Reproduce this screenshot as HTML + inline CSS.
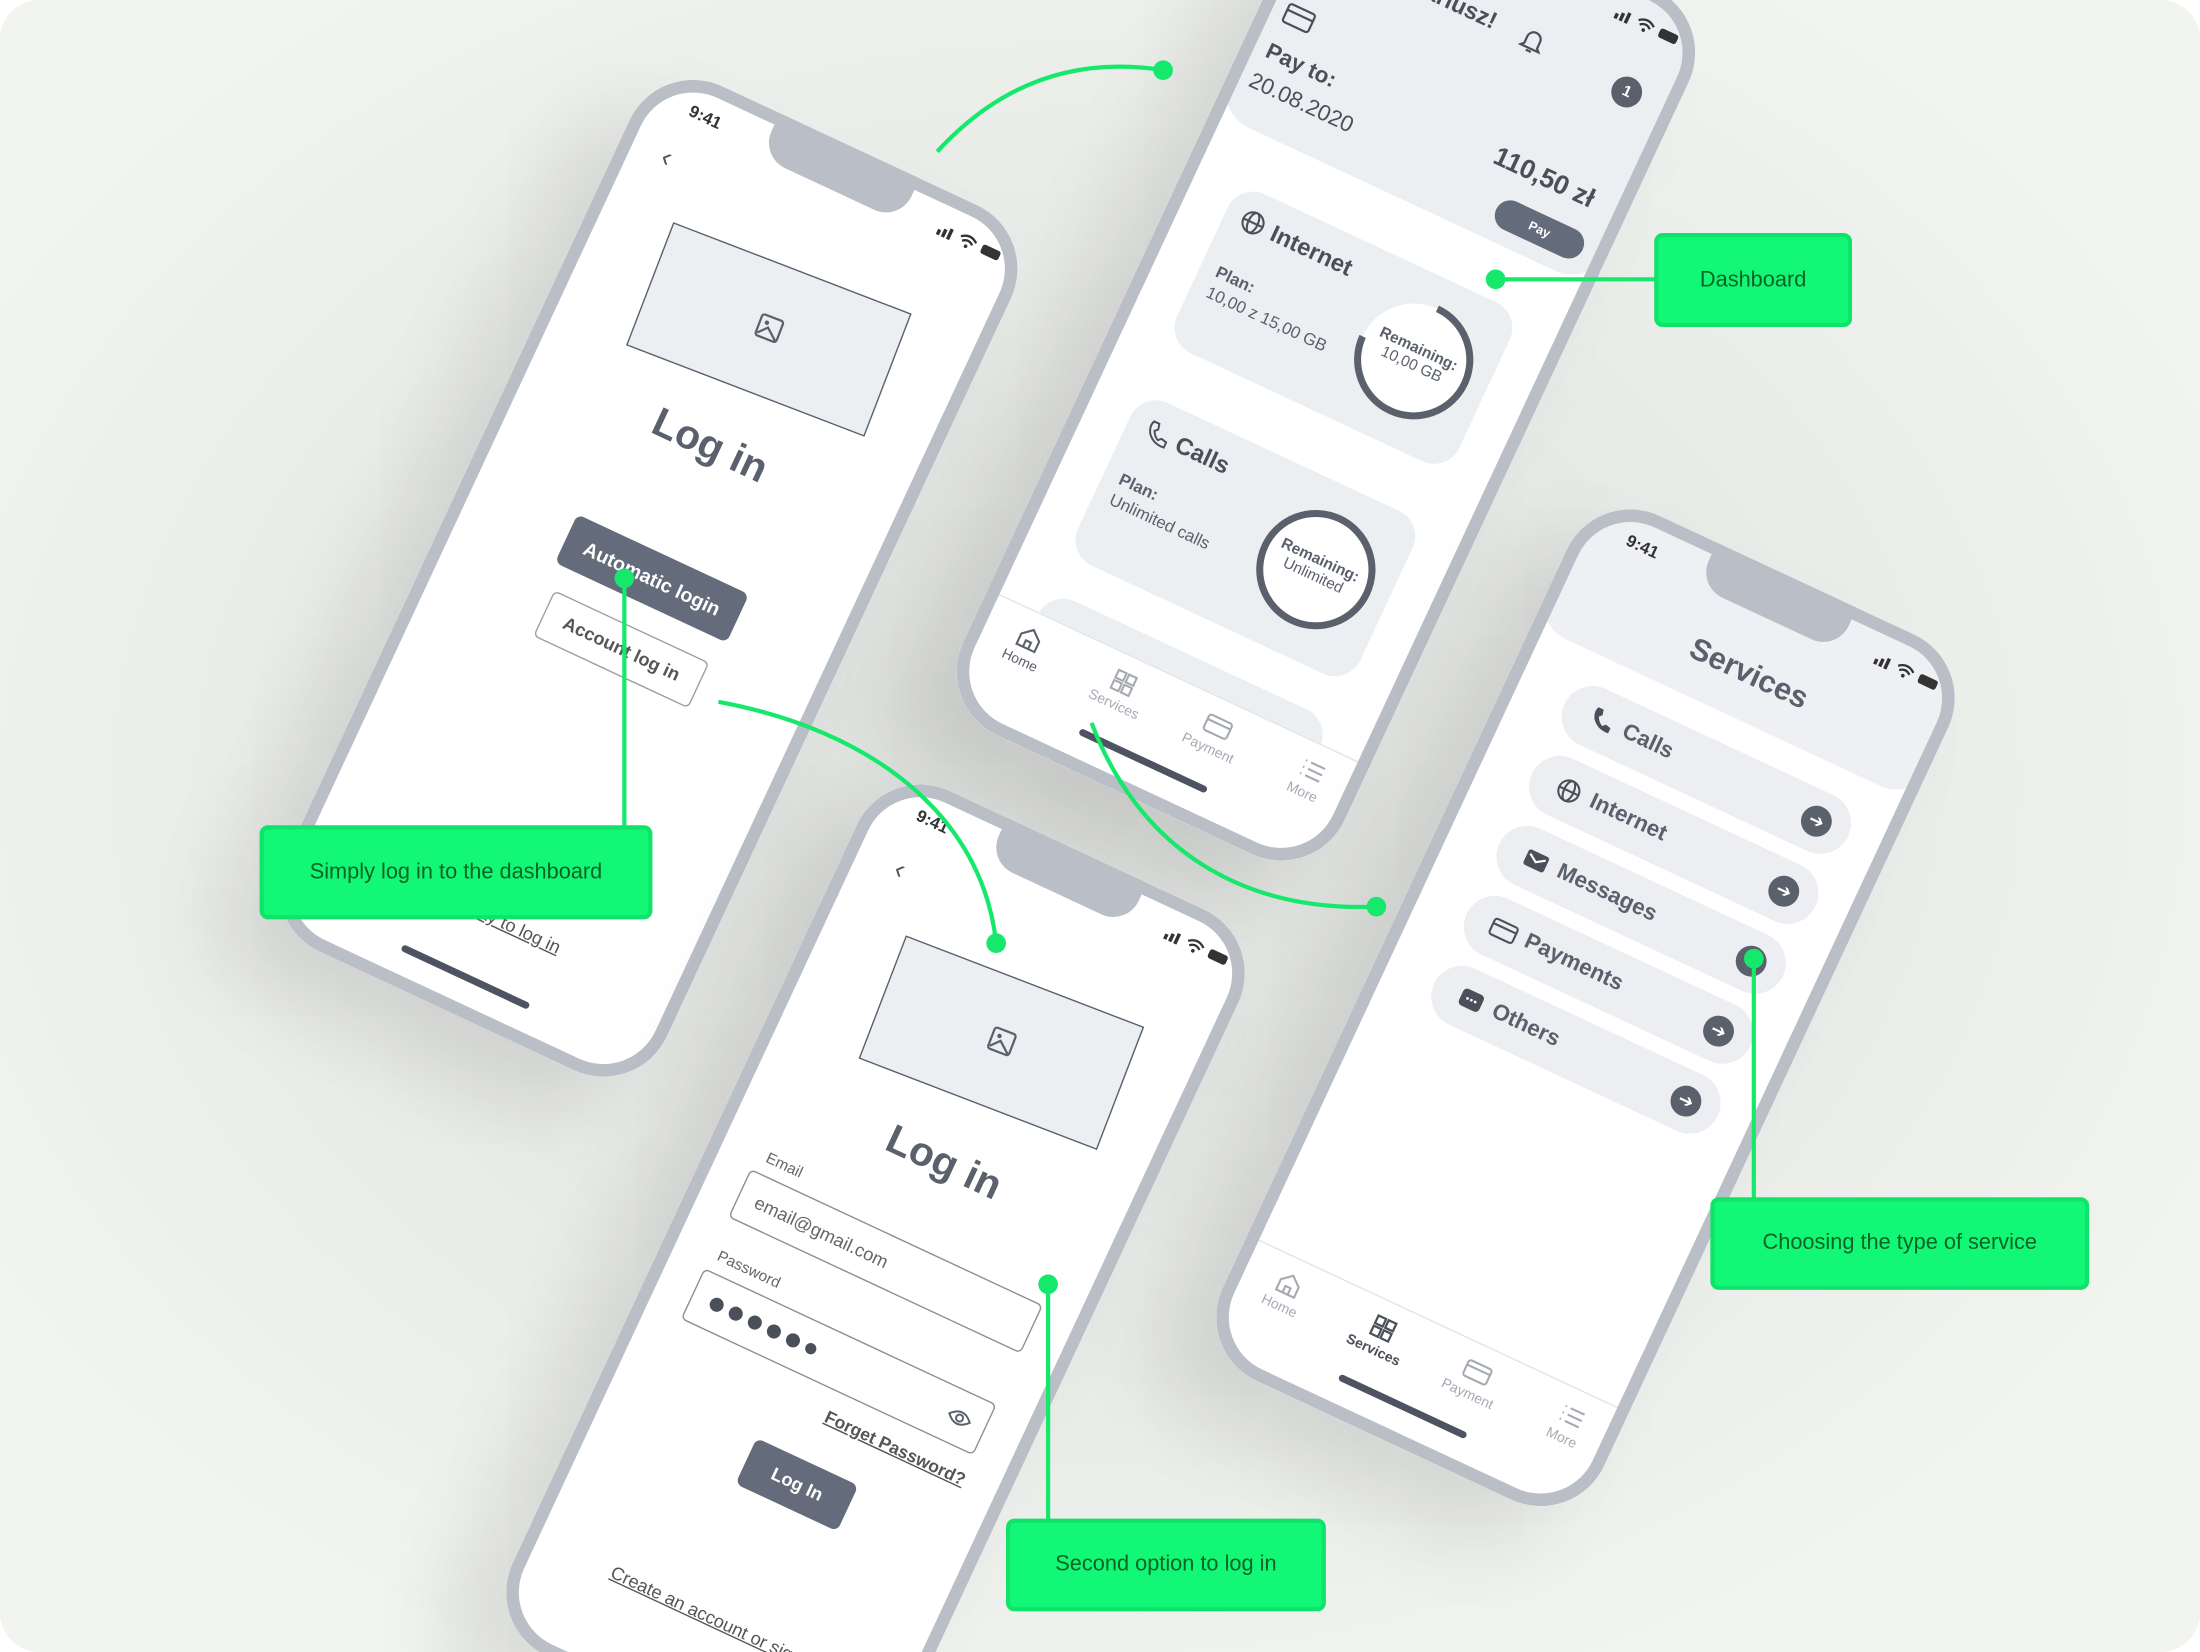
<!DOCTYPE html>
<html><head><meta charset="utf-8">
<style>
html,body{margin:0;padding:0;background:#fff;width:2200px;height:1652px;overflow:hidden;font-family:"Liberation Sans",sans-serif}
#stage{position:absolute;left:0;top:0;width:1568px;height:1177px;transform:scale(1.40306,1.40357);transform-origin:0 0;overflow:hidden;border-radius:28px;
background:radial-gradient(ellipse 900px 700px at 760px 560px,#dcdedb 0%,#e6e8e5 45%,#f2f4f0 100%)}
.ph{position:absolute;width:300px;height:680px;transform:rotate(25deg);border-radius:50px;background:#fff;overflow:hidden;box-shadow:-30px 40px 60px rgba(0,0,0,.10)}
.bz{position:absolute;left:0;top:0;right:0;bottom:0;border:9px solid #b9bec7;border-radius:50px;z-index:50}
.notch{position:absolute;left:95px;top:0;width:110px;height:34px;background:#b9bec7;border-radius:0 0 20px 20px;z-index:40}
.a{position:absolute}
.t941{position:absolute;left:36px;top:18px;font-size:12px;font-weight:bold;color:#333;z-index:41}
.st{position:absolute;left:232px;top:20px;z-index:41}
.img{position:absolute;left:62px;top:96px;width:180px;height:92px;border:1.6px solid #5a606c;background:#eceff2;transform:rotate(-4deg)}
.h1{position:absolute;left:0;width:300px;text-align:center;font-size:29px;font-weight:bold;color:#5a606c}
.btn{position:absolute;background:#646c7b;color:#fff;font-size:14px;font-weight:bold;text-align:center;border-radius:5px}
.obtn{position:absolute;border:1.5px solid #9aa0aa;color:#555;font-size:13px;font-weight:bold;text-align:center;border-radius:4px;background:#fff}
.ind{position:absolute;left:102px;top:650px;width:100px;height:5px;border-radius:3px;background:#4d5360;z-index:45}
.card{position:absolute;left:40px;width:222px;background:#eceff2;border-radius:20px}
.tabs{position:absolute;left:0;top:588px;width:300px;height:92px;background:#fff;border-top:1px solid #e2e4e8;z-index:30}
.tab{position:absolute;top:10px;width:60px;text-align:center;font-size:10px;color:#a5aab2}
.row{position:absolute;left:45px;width:223px;height:44px;background:#eceef1;border-radius:22px}
.row span{position:absolute;left:46px;top:13px;font-size:16px;font-weight:bold;color:#5a606c}
.arr{position:absolute;right:14px;top:11px;width:22px;height:22px;border-radius:11px;background:#5a606c;color:#fff;font-size:13px;text-align:center;line-height:22px}
.lbl{position:absolute;background:#13f777;border:3px solid #10e36a;border-radius:6px;color:#0b6425;font-size:15.5px;text-align:center;box-sizing:border-box}
</style></head><body>
<div id="stage">

<div class="ph" style="left:312px;top:72px">
 <div class="notch"></div><div class="t941">9:41</div>
 <svg class="st" width="50" height="12" viewBox="0 0 50 12"><rect x="0" y="7" width="2.5" height="4" fill="#333"/><rect x="4" y="5" width="2.5" height="6" fill="#333"/><rect x="8" y="3" width="2.5" height="8" fill="#333"/><path d="M17 5 Q23 0 29 5 M19 7.5 Q23 4 27 7.5" stroke="#333" stroke-width="1.6" fill="none"/><circle cx="23" cy="10" r="1.3" fill="#333"/><rect x="34" y="3" width="14" height="7" rx="2" fill="#333"/></svg>
 <div class="a" style="left:32px;top:52px;font-size:20px;color:#555">‹</div>
 <div class="img"><svg style="position:absolute;left:80px;top:35px" width="20" height="20" viewBox="0 0 20 20"><rect x="2" y="2" width="16" height="16" rx="2" fill="none" stroke="#5a606c" stroke-width="1.6"/><circle cx="7" cy="7" r="1.6" fill="#5a606c"/><path d="M3 16 L9 10 L17 17" stroke="#5a606c" stroke-width="1.6" fill="none"/></svg></div>
 <div class="h1" style="top:220px">Log in</div>
 <div class="btn" style="left:85px;top:320px;width:135px;height:38px;line-height:38px">Automatic login</div>
 <div class="obtn" style="left:93px;top:376px;width:120px;height:34px;line-height:34px">Account log in</div>
 <div class="a" style="left:0;width:300px;top:598px;text-align:center;font-size:13px;color:#555;text-decoration:underline">Other way to log in</div>
 <div class="ind"></div>
 <div class="bz"></div>
</div>

<div class="ph" style="left:795px;top:-82px">
 <div class="a" style="left:0;top:0;width:300px;height:212px;background:#eceff2;border-radius:0 0 30px 30px"></div>
 <div class="notch"></div>
 <svg class="st" width="50" height="12" viewBox="0 0 50 12"><rect x="0" y="7" width="2.5" height="4" fill="#333"/><rect x="4" y="5" width="2.5" height="6" fill="#333"/><rect x="8" y="3" width="2.5" height="8" fill="#333"/><path d="M17 5 Q23 0 29 5 M19 7.5 Q23 4 27 7.5" stroke="#333" stroke-width="1.6" fill="none"/><circle cx="23" cy="10" r="1.3" fill="#333"/><rect x="34" y="3" width="14" height="7" rx="2" fill="#333"/></svg>
 <div class="a" style="left:62px;top:60px;font-size:17px;font-weight:bold;color:#4a4f59">Hi, Mariusz!</div>
 <svg class="a" style="left:178px;top:60px" width="18" height="20" viewBox="0 0 18 20"><path d="M4 14 V9 a5 5 0 0 1 10 0 V14 L16 16 H2 Z M7 18 h4" stroke="#4a4f59" stroke-width="1.6" fill="none"/></svg>
 <div class="a" style="left:252px;top:64px;width:22px;height:22px;border-radius:11px;background:#5a606c;color:#fff;font-size:11px;text-align:center;line-height:22px;font-weight:bold">1</div>
 <svg class="a" style="left:18px;top:118px" width="22" height="16" viewBox="0 0 22 16"><rect x="1" y="1" width="20" height="14" rx="2" fill="none" stroke="#4a4f59" stroke-width="1.6"/><path d="M1 6 H21" stroke="#4a4f59" stroke-width="1.6"/></svg>
 <div class="a" style="left:18px;top:148px;font-size:16px;font-weight:bold;color:#4a4f59">Pay to:</div>
 <div class="a" style="left:16px;top:172px;font-size:16px;color:#4a4f59">20.08.2020</div>
 <div class="a" style="left:170px;top:145px;width:104px;text-align:right;font-size:19px;font-weight:bold;color:#4a4f59">110,50 zł</div>
 <div class="btn" style="left:214px;top:179px;width:68px;height:22px;line-height:22px;font-size:9px;border-radius:11px">Pay</div>
 <div class="card" style="top:250px;height:125px">
  <svg class="a" style="left:12px;top:13px" width="18" height="18" viewBox="0 0 18 18"><circle cx="9" cy="9" r="7.5" fill="none" stroke="#4a4f59" stroke-width="1.5"/><ellipse cx="9" cy="9" rx="3.5" ry="7.5" fill="none" stroke="#4a4f59" stroke-width="1.5"/><path d="M1.5 9 H16.5" stroke="#4a4f59" stroke-width="1.5"/></svg>
  <div class="a" style="left:36px;top:13px;font-size:17px;font-weight:bold;color:#4a4f59">Internet</div>
  <div class="a" style="left:12px;top:57px;font-size:12px;font-weight:bold;color:#5a606c">Plan:</div>
  <div class="a" style="left:12px;top:73px;font-size:12px;color:#5a606c">10,00 z 15,00 GB</div>
  <svg class="a" style="left:121px;top:17px" width="90" height="90" viewBox="0 0 90 90"><circle cx="45" cy="45" r="40" fill="#fff"/><circle cx="45" cy="45" r="40" fill="none" stroke="#5a606c" stroke-width="5" stroke-dasharray="188 300" transform="rotate(-90 45 45)"/></svg>
  <div class="a" style="left:121px;top:48px;width:90px;text-align:center;font-size:11px;font-weight:bold;color:#5a606c">Remaining:<br><span style="font-weight:normal">10,00 GB</span></div>
 </div>
 <div class="card" style="top:414px;height:128px">
  <svg class="a" style="left:14px;top:14px" width="18" height="18" viewBox="0 0 18 18"><path d="M3 2 L7 2 L8 6 L6 8 Q8 12 11 13 L13 11 L17 12 L17 16 Q9 17 4 11 Q1 6 3 2 Z" fill="none" stroke="#4a4f59" stroke-width="1.4"/></svg>
  <div class="a" style="left:38px;top:14px;font-size:17px;font-weight:bold;color:#4a4f59">Calls</div>
  <div class="a" style="left:12px;top:56px;font-size:12px;font-weight:bold;color:#5a606c">Plan:</div>
  <div class="a" style="left:12px;top:72px;font-size:12px;color:#5a606c">Unlimited calls</div>
  <svg class="a" style="left:121px;top:18px" width="90" height="90" viewBox="0 0 90 90"><circle cx="45" cy="45" r="40" fill="#fff" stroke="#5a606c" stroke-width="5"/></svg>
  <div class="a" style="left:121px;top:50px;width:90px;text-align:center;font-size:11px;font-weight:bold;color:#5a606c">Remaining:<br><span style="font-weight:normal">Unlimited</span></div>
 </div>
 <div class="card" style="top:570px;height:80px"></div>
 <div class="tabs">
  <div class="tab" style="left:12px;color:#5a606c"><svg width="18" height="18" viewBox="0 0 18 18"><path d="M2 8 L9 2 L16 8 V16 H2 Z M7 16 V11 H11 V16" fill="none" stroke="#5a606c" stroke-width="1.5"/></svg><br>Home</div>
  <div class="tab" style="left:86px"><svg width="18" height="18" viewBox="0 0 18 18"><rect x="2" y="2" width="6" height="6" fill="none" stroke="#a5aab2" stroke-width="1.5"/><rect x="10" y="2" width="6" height="6" fill="none" stroke="#a5aab2" stroke-width="1.5"/><rect x="2" y="10" width="6" height="6" fill="none" stroke="#a5aab2" stroke-width="1.5"/><rect x="10" y="10" width="6" height="6" fill="none" stroke="#a5aab2" stroke-width="1.5"/></svg><br>Services</div>
  <div class="tab" style="left:160px"><svg width="20" height="18" viewBox="0 0 20 18"><rect x="1" y="3" width="18" height="12" rx="2" fill="none" stroke="#a5aab2" stroke-width="1.5"/><path d="M1 7 H19" stroke="#a5aab2" stroke-width="1.5"/></svg><br>Payment</div>
  <div class="tab" style="left:234px"><svg width="18" height="18" viewBox="0 0 18 18"><path d="M6 4 H17 M6 9 H17 M6 14 H17 M2 4 H3 M2 9 H3 M2 14 H3" stroke="#a5aab2" stroke-width="1.5"/></svg><br>More</div>
 </div>
 <div class="ind"></div>
 <div class="bz"></div>
</div>

<div class="ph" style="left:474px;top:574px">
 <div class="notch"></div><div class="t941">9:41</div>
 <svg class="st" width="50" height="12" viewBox="0 0 50 12"><rect x="0" y="7" width="2.5" height="4" fill="#333"/><rect x="4" y="5" width="2.5" height="6" fill="#333"/><rect x="8" y="3" width="2.5" height="8" fill="#333"/><path d="M17 5 Q23 0 29 5 M19 7.5 Q23 4 27 7.5" stroke="#333" stroke-width="1.6" fill="none"/><circle cx="23" cy="10" r="1.3" fill="#333"/><rect x="34" y="3" width="14" height="7" rx="2" fill="#333"/></svg>
 <div class="a" style="left:38px;top:55px;font-size:20px;color:#555">‹</div>
 <div class="img" style="left:68px;top:100px"><svg style="position:absolute;left:80px;top:35px" width="20" height="20" viewBox="0 0 20 20"><rect x="2" y="2" width="16" height="16" rx="2" fill="none" stroke="#5a606c" stroke-width="1.6"/><circle cx="7" cy="7" r="1.6" fill="#5a606c"/><path d="M3 16 L9 10 L17 17" stroke="#5a606c" stroke-width="1.6" fill="none"/></svg></div>
 <div class="h1" style="top:226px;left:8px">Log in</div>
 <div class="a" style="left:42px;top:286px;font-size:11px;color:#666">Email</div>
 <div class="a" style="left:35px;top:304px;width:230px;height:38px;border:1.5px solid #8a909a;border-radius:4px;box-sizing:border-box"><span style="position:absolute;left:12px;top:11px;font-size:13px;color:#666">email@gmail.com</span></div>
 <div class="a" style="left:40px;top:364px;font-size:11px;color:#666">Password</div>
 <div class="a" style="left:35px;top:382px;width:230px;height:40px;border:1.5px solid #8a909a;border-radius:4px;box-sizing:border-box">
  <svg style="position:absolute;left:12px;top:13px" width="90" height="12" viewBox="0 0 90 12"><circle cx="6" cy="6" r="5" fill="#4a4f59"/><circle cx="21" cy="6" r="5" fill="#4a4f59"/><circle cx="36" cy="6" r="5" fill="#4a4f59"/><circle cx="51" cy="6" r="5" fill="#4a4f59"/><circle cx="66" cy="6" r="5" fill="#4a4f59"/><circle cx="80" cy="6" r="4" fill="#4a4f59"/></svg>
  <svg style="position:absolute;right:10px;top:12px" width="18" height="14" viewBox="0 0 18 14"><path d="M1 7 Q9 -2 17 7 Q9 16 1 7 Z" fill="none" stroke="#5a606c" stroke-width="1.4"/><circle cx="9" cy="7" r="2.5" fill="none" stroke="#5a606c" stroke-width="1.4"/></svg>
 </div>
 <div class="a" style="left:130px;width:137px;top:434px;text-align:right;font-size:12.5px;font-weight:bold;color:#555;text-decoration:underline">Forget Password?</div>
 <div class="btn" style="left:120px;top:476px;width:80px;height:36px;line-height:36px;font-size:13px">Log In</div>
 <div class="a" style="left:0;width:300px;top:598px;text-align:center;font-size:13px;color:#555;text-decoration:underline">Create an account or sign up</div>
 <div class="bz"></div>
</div>

<div class="ph" style="left:980px;top:378px">
 <div class="a" style="left:0;top:0;width:300px;height:108px;background:#eef0f3;border-radius:0 0 26px 26px"></div>
 <div class="notch"></div><div class="t941">9:41</div>
 <svg class="st" width="50" height="12" viewBox="0 0 50 12"><rect x="0" y="7" width="2.5" height="4" fill="#333"/><rect x="4" y="5" width="2.5" height="6" fill="#333"/><rect x="8" y="3" width="2.5" height="8" fill="#333"/><path d="M17 5 Q23 0 29 5 M19 7.5 Q23 4 27 7.5" stroke="#333" stroke-width="1.6" fill="none"/><circle cx="23" cy="10" r="1.3" fill="#333"/><rect x="34" y="3" width="14" height="7" rx="2" fill="#333"/></svg>
 <div class="a" style="left:0;width:310px;top:62px;text-align:center;font-size:22px;font-weight:bold;color:#5a606c">Services</div>
 <div class="row" style="top:128px"><svg class="a" style="left:20px;top:12px" width="18" height="18" viewBox="0 0 18 18"><path d="M3 2 L7 2 L8 6 L6 8 Q8 12 11 13 L13 11 L17 12 L17 16 Q9 17 4 11 Q1 6 3 2 Z" fill="#4a4f59"/></svg><span>Calls</span><div class="arr">➔</div></div>
 <div class="row" style="top:183px"><svg class="a" style="left:20px;top:13px" width="18" height="18" viewBox="0 0 18 18"><circle cx="9" cy="9" r="7.5" fill="none" stroke="#4a4f59" stroke-width="1.5"/><ellipse cx="9" cy="9" rx="3.5" ry="7.5" fill="none" stroke="#4a4f59" stroke-width="1.5"/><path d="M1.5 9 H16.5" stroke="#4a4f59" stroke-width="1.5"/></svg><span>Internet</span><div class="arr">➔</div></div>
 <div class="row" style="top:238px"><svg class="a" style="left:20px;top:14px" width="18" height="16" viewBox="0 0 18 16"><rect x="1" y="2" width="16" height="12" rx="2" fill="#4a4f59"/><path d="M3 5 L9 9 L15 5" stroke="#fff" stroke-width="1.5" fill="none"/></svg><span>Messages</span><div class="arr">➔</div></div>
 <div class="row" style="top:293px"><svg class="a" style="left:19px;top:14px" width="20" height="16" viewBox="0 0 20 16"><rect x="1" y="2" width="18" height="12" rx="2" fill="none" stroke="#4a4f59" stroke-width="1.5"/><path d="M1 6 H19" stroke="#4a4f59" stroke-width="1.5"/></svg><span>Payments</span><div class="arr">➔</div></div>
 <div class="row" style="top:348px"><svg class="a" style="left:20px;top:13px" width="18" height="18" viewBox="0 0 18 18"><rect x="1" y="2" width="16" height="13" rx="3" fill="#4a4f59"/><circle cx="6" cy="8.5" r="1" fill="#fff"/><circle cx="9" cy="8.5" r="1" fill="#fff"/><circle cx="12" cy="8.5" r="1" fill="#fff"/></svg><span>Others</span><div class="arr">➔</div></div>
 <div class="tabs">
  <div class="tab" style="left:12px"><svg width="18" height="18" viewBox="0 0 18 18"><path d="M2 8 L9 2 L16 8 V16 H2 Z M7 16 V11 H11 V16" fill="none" stroke="#a5aab2" stroke-width="1.5"/></svg><br>Home</div>
  <div class="tab" style="left:86px;color:#4a4f59;font-weight:bold"><svg width="18" height="18" viewBox="0 0 18 18"><rect x="2" y="2" width="6" height="6" fill="none" stroke="#4a4f59" stroke-width="1.6"/><rect x="10" y="2" width="6" height="6" fill="none" stroke="#4a4f59" stroke-width="1.6"/><rect x="2" y="10" width="6" height="6" fill="none" stroke="#4a4f59" stroke-width="1.6"/><rect x="10" y="10" width="6" height="6" fill="none" stroke="#4a4f59" stroke-width="1.6"/></svg><br>Services</div>
  <div class="tab" style="left:160px"><svg width="20" height="18" viewBox="0 0 20 18"><rect x="1" y="3" width="18" height="12" rx="2" fill="none" stroke="#a5aab2" stroke-width="1.5"/><path d="M1 7 H19" stroke="#a5aab2" stroke-width="1.5"/></svg><br>Payment</div>
  <div class="tab" style="left:234px"><svg width="18" height="18" viewBox="0 0 18 18"><path d="M6 4 H17 M6 9 H17 M6 14 H17 M2 4 H3 M2 9 H3 M2 14 H3" stroke="#a5aab2" stroke-width="1.5"/></svg><br>More</div>
 </div>
 <div class="ind"></div>
 <div class="bz"></div>
</div>

<svg class="a" style="left:0;top:0;z-index:90" width="1568" height="1177" viewBox="0 0 1568 1177">
 <g stroke="#16e86c" stroke-width="3" fill="none">
  <path d="M668 108 Q735 35 829 50"/>
  <path d="M1066 199 H1180"/>
  <path d="M445 412 V590"/>
  <path d="M512 500 C620 520 700 580 710 672"/>
  <path d="M778 515 C810 600 880 650 981 646"/>
  <path d="M747 915 V1084"/>
  <path d="M1250 683 V855"/>
 </g>
 <g fill="#16e86c">
  <circle cx="829" cy="50" r="7"/><circle cx="1066" cy="199" r="7"/><circle cx="445" cy="412" r="7"/>
  <circle cx="710" cy="672" r="7"/><circle cx="981" cy="646" r="7"/><circle cx="747" cy="915" r="7"/><circle cx="1250" cy="683" r="7"/>
 </g>
</svg>
<div class="lbl" style="left:185px;top:588px;width:280px;height:67px;line-height:61px;z-index:95">Simply log in to the dashboard</div>
<div class="lbl" style="left:1179px;top:166px;width:141px;height:67px;line-height:61px;z-index:95">Dashboard</div>
<div class="lbl" style="left:1219px;top:853px;width:270px;height:66px;line-height:60px;z-index:95">Choosing the type of service</div>
<div class="lbl" style="left:717px;top:1082px;width:228px;height:66px;line-height:60px;z-index:95">Second option to log in</div>
</div>
</body></html>
